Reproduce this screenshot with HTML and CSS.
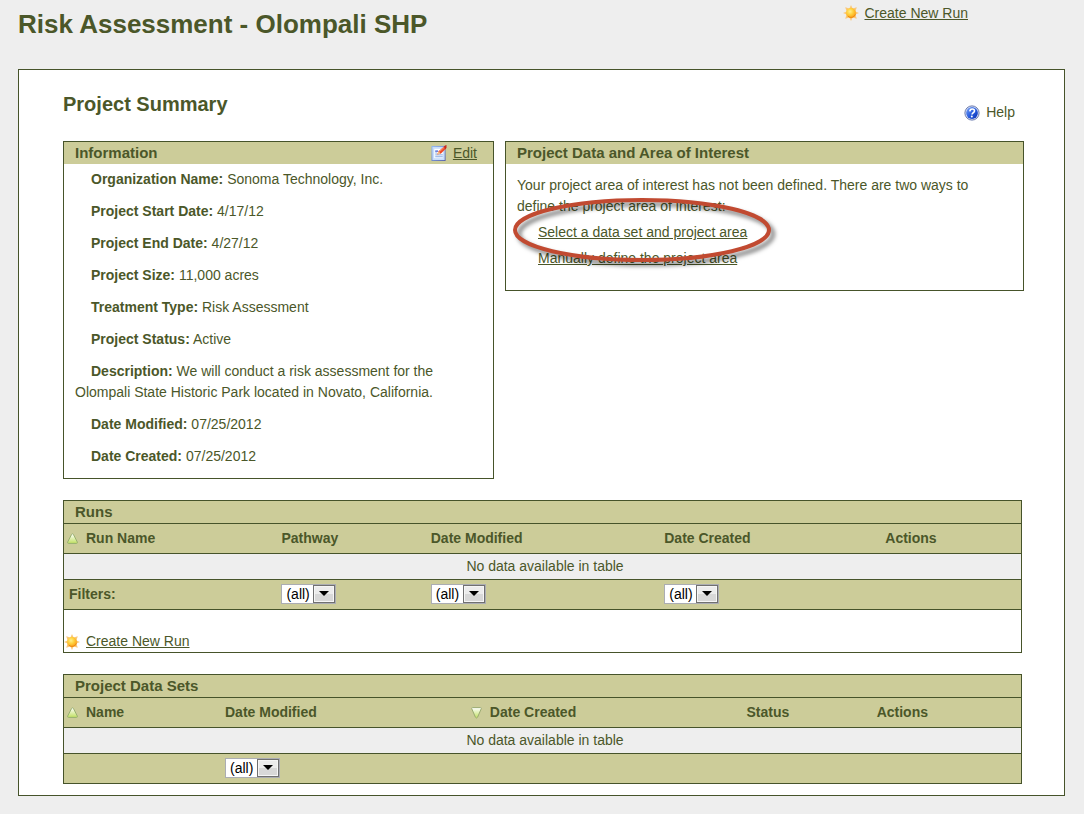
FILE: index.html
```html
<!DOCTYPE html>
<html lang="en">
<head>
<meta charset="utf-8">
<title>Risk Assessment - Olompali SHP</title>
<link rel="stylesheet" href="styles.css">
</head>
<body>
<svg class="defs" width="0" height="0" aria-hidden="true">
  <defs>
    <radialGradient id="sunFill" cx="40%" cy="35%" r="65%">
      <stop offset="0" stop-color="#fff08a"/><stop offset="0.5" stop-color="#ffcf3a"/><stop offset="1" stop-color="#f9a01c"/>
    </radialGradient>
    <linearGradient id="helpFill" x1="0" y1="0" x2="1" y2="1">
      <stop offset="0" stop-color="#7fa6f5"/><stop offset="0.5" stop-color="#2a5fe0"/><stop offset="1" stop-color="#0a2fb0"/>
    </linearGradient>
    <linearGradient id="pageFill" x1="0" y1="0" x2="1" y2="1">
      <stop offset="0" stop-color="#8fb8f2"/><stop offset="1" stop-color="#5560a8"/>
    </linearGradient>
    <linearGradient id="sortFill" x1="0" y1="0" x2="0" y2="1">
      <stop offset="0" stop-color="#ffffff"/><stop offset="1" stop-color="#c0e060"/>
    </linearGradient>
    <symbol id="sun" viewBox="0 0 16 16">
      <path d="M8 0 9.600 3.600 13.800 2.200 12.400 6.400 16 8 12.400 9.600 13.800 13.800 9.600 12.400 8 16 6.400 12.400 2.200 13.800 3.600 9.600 0 8 3.600 6.400 2.200 2.200 6.400 3.600Z" fill="#fac878"/>
      <circle cx="8" cy="8" r="4.900" fill="url(#sunFill)"/>
      <path d="M5 11.300a4.600 4.600 0 0 0 7.400-1.900" fill="none" stroke="#f08a10" stroke-width="1"/>
    </symbol>
    <symbol id="help" viewBox="0 0 16 16">
      <circle cx="8" cy="8" r="7.100" fill="#e4eafa" stroke="#6878ac" stroke-width="1"/>
      <circle cx="8" cy="8" r="5.900" fill="url(#helpFill)"/>
      <path d="M5.800 6.300C6 4.500 7 4 8.200 4c1.400 0 2.300.8 2.300 1.900 0 1.700-2.300 1.800-2.500 3.600" fill="none" stroke="#fff" stroke-width="1.600"/>
      <circle cx="7.800" cy="11.500" r="1" fill="#fff"/>
    </symbol>
    <symbol id="edit" viewBox="0 0 16 17">
      <rect x="0" y="1" width="15" height="16" fill="url(#pageFill)"/>
      <rect x="1" y="2" width="13" height="14" fill="#c8defa"/>
      <rect x="3" y="4" width="9" height="10" fill="#fff"/>
      <path d="M4 6.500h3M4 8.500h2M4 10.500h8M4 12.500h8" stroke="#7da3e0" stroke-width="1"/>
      <path d="M4 6.500h3" stroke="#3a4ed8" stroke-width="1"/>
      <path d="M6 10 7.600 6.600 13 1.800 15.400 4 9.800 9.200Z" fill="#ee4a28"/>
      <path d="M8.500 7 13.200 2.800" stroke="#ff9a78" stroke-width="1"/>
      <path d="M13 1.800 14.400.400 16 0V3l-1 1.400Z" fill="#c8281c"/>
      <path d="M6 10 7.600 6.600 9.800 9.200Z" fill="#f3c08a"/>
    </symbol>
    <symbol id="sortUp" viewBox="0 0 11 12">
      <path d="M4.600 1.400Q5.500.200 6.400 1.400L10.400 9.200Q10.500 10.400 9.500 10.400H1.500Q.500 10.400.600 9.200Z" fill="url(#sortFill)" stroke="#98b070" stroke-width="1"/>
    </symbol>
    <symbol id="sortDown" viewBox="0 0 11 12">
      <path d="M1.500.600H9.500Q10.500.600 10.300 1.600L6.600 10.200Q5.500 11.800 4.400 10.200L.700 1.600Q.500.600 1.500.600Z" fill="url(#sortFill)" stroke="#9aaa72" stroke-width="1"/>
    </symbol>
    <symbol id="drop" viewBox="0 0 22 18">
      <rect width="22" height="18" fill="#707070"/>
      <rect x="1" y="1" width="20" height="16" fill="#f6f6f6"/>
      <rect x="2" y="9" width="18" height="7" fill="#d8d8d8"/>
      <rect x="2" y="2" width="18" height="7" fill="#ececec"/>
      <path d="M6 6h10l-5 5Z" fill="#000"/>
    </symbol>
  </defs>
</svg>

<header class="page-header">
  <h1>Risk Assessment - Olompali SHP</h1>
  <a class="icon-link" href="#new-run"><svg class="icon" aria-hidden="true"><use href="#sun"/></svg><span>Create New Run</span></a>
</header>

<main class="card">
  <div class="card-header">
    <h2>Project Summary</h2>
    <a class="icon-link help" href="#help"><svg class="icon" aria-hidden="true"><use href="#help"/></svg><span>Help</span></a>
  </div>

  <div class="panels">
    <section class="box">
      <div class="bar">
        <h3>Information</h3>
        <a class="icon-link" href="#edit"><svg class="icon" aria-hidden="true"><use href="#edit"/></svg><span>Edit</span></a>
      </div>
      <div class="details">
        <p><b>Organization Name:</b> Sonoma Technology, Inc.</p>
        <p><b>Project Start Date:</b> 4/17/12</p>
        <p><b>Project End Date:</b> 4/27/12</p>
        <p><b>Project Size:</b> 11,000 acres</p>
        <p><b>Treatment Type:</b> Risk Assessment</p>
        <p><b>Project Status:</b> Active</p>
        <p><b>Description:</b> We will conduct a risk assessment for the Olompali State Historic Park located in Novato, California.</p>
        <p><b>Date Modified:</b> 07/25/2012</p>
        <p><b>Date Created:</b> 07/25/2012</p>
      </div>
    </section>

    <section class="box area">
      <div class="bar"><h3>Project Data and Area of Interest</h3></div>
      <div class="area-body">
        <p>Your project area of interest has not been defined. There are two ways to define the project area of interest:</p>
        <ul>
          <li><a href="#select">Select a data set and project area</a></li>
          <li><a href="#manual">Manually define the project area</a></li>
        </ul>
      </div>
      <svg class="callout" viewBox="0 0 270 76" aria-hidden="true">
        <ellipse cx="133" cy="35" rx="127" ry="30"/>
      </svg>
    </section>
  </div>

  <section class="box listing">
    <div class="bar"><h3>Runs</h3></div>
    <table class="runs">
      <colgroup><col class="run-name"><col class="run-path"><col class="run-modified"><col class="run-created"><col></colgroup>
      <thead>
        <tr>
          <th scope="col" class="sorted"><button type="button"><svg class="sort" aria-hidden="true"><use href="#sortUp"/></svg>Run Name</button></th>
          <th scope="col"><button type="button">Pathway</button></th>
          <th scope="col"><button type="button">Date Modified</button></th>
          <th scope="col"><button type="button">Date Created</button></th>
          <th scope="col">Actions</th>
        </tr>
      </thead>
      <tbody><tr><td colspan="5">No data available in table</td></tr></tbody>
      <tfoot>
        <tr>
          <th scope="row">Filters:</th>
          <td><span class="select"><select aria-label="Filter by pathway"><option>(all)</option></select><svg aria-hidden="true"><use href="#drop"/></svg></span></td>
          <td><span class="select"><select aria-label="Filter runs by date modified"><option>(all)</option></select><svg aria-hidden="true"><use href="#drop"/></svg></span></td>
          <td><span class="select"><select aria-label="Filter runs by date created"><option>(all)</option></select><svg aria-hidden="true"><use href="#drop"/></svg></span></td>
          <td></td>
        </tr>
      </tfoot>
    </table>
    <div class="listing-footer">
      <a class="icon-link" href="#new-run"><svg class="icon" aria-hidden="true"><use href="#sun"/></svg><span>Create New Run</span></a>
    </div>
  </section>

  <section class="box listing">
    <div class="bar"><h3>Project Data Sets</h3></div>
    <table class="sets">
      <colgroup><col class="set-name"><col class="set-modified"><col class="set-created"><col class="set-status"><col></colgroup>
      <thead>
        <tr>
          <th scope="col" class="sorted"><button type="button"><svg class="sort" aria-hidden="true"><use href="#sortUp"/></svg>Name</button></th>
          <th scope="col"><button type="button">Date Modified</button></th>
          <th scope="col" class="sorted"><button type="button"><svg class="sort" aria-hidden="true"><use href="#sortDown"/></svg>Date Created</button></th>
          <th scope="col">Status</th>
          <th scope="col">Actions</th>
        </tr>
      </thead>
      <tbody><tr><td colspan="5">No data available in table</td></tr></tbody>
      <tfoot>
        <tr>
          <td></td>
          <td><span class="select"><select aria-label="Filter data sets by date modified"><option>(all)</option></select><svg aria-hidden="true"><use href="#drop"/></svg></span></td>
          <td></td>
          <td></td>
          <td></td>
        </tr>
      </tfoot>
    </table>
  </section>
</main>
</body>
</html>
```

FILE: styles.css
```css
:root {
  --ink: #4b5729;
  --line: #46532a;
  --khaki: #cccc99;
  --grey: #eeeeee;
}

* { box-sizing: border-box; }

body {
  margin: 0;
  padding: 0 19px 18px 18px;
  background: var(--grey);
  color: var(--ink);
  font: 14px/21px "Liberation Sans", Arial, sans-serif;
}

h1, h2, h3, p, ul { margin: 0; padding: 0; }
ul { list-style: none; }
a { color: inherit; }
.defs { position: absolute; }

.page-header {
  display: flex;
  justify-content: space-between;
  align-items: flex-start;
  padding: 0 97px 21px 0;
}
.page-header h1 { font-size: 26px; line-height: 48px; }
.page-header .icon-link { line-height: 26px; }

.icon-link {
  display: inline-flex;
  align-items: center;
  gap: 6px;
  text-decoration: none;
}
.icon-link span { text-decoration: underline; }
.icon { width: 16px; height: 16px; }

.card {
  background: #fff;
  border: 1px solid var(--line);
  padding: 0 40px 11px 44px;
}
.card-header {
  display: flex;
  justify-content: space-between;
  align-items: flex-start;
  padding: 21px 9px 24px 0;
}
.card-header h2 { font-size: 20px; line-height: 26px; }
.help { padding-top: 11px; line-height: 21px; margin-bottom: -8px; }
.help span { text-decoration: none; }

.panels {
  display: grid;
  grid-template-columns: 431fr 519fr;
  align-items: start;
  gap: 11px;
}
.box { border: 1px solid var(--line); }
.bar {
  display: flex;
  justify-content: space-between;
  align-items: center;
  padding: 0 16px 0 11px;
  background: var(--khaki);
  line-height: 22px;
}
.bar h3 { font-size: 15px; }

.details { padding: 5px 11px 11px; }
.details p { padding-left: 0; text-indent: 16px; }
.details p + p { margin-top: 11px; }

.area { position: relative; }
.area-body { padding: 11px 32px 21px 11px; }
.area-body li { margin: 5px 0 0 21px; }
.callout {
  position: absolute;
  left: 3px;
  top: 53px;
  width: 270px;
  height: 76px;
  overflow: visible;
  pointer-events: none;
}
.callout ellipse {
  fill: none;
  stroke: #c14a31;
  stroke-width: 4;
  filter: drop-shadow(4px 4px 2px rgba(0, 0, 0, 0.5));
}

.listing { margin: 21px 2px 0 0; }
.listing .bar { border-bottom: 1px solid var(--line); }
.listing-footer {
  border-top: 1px solid var(--line);
  padding-top: 21px;
}
.listing-footer .icon-link { display: flex; }

table {
  width: 100%;
  table-layout: fixed;
  border-spacing: 0;
}
th, td { padding: 0 0 0 5px; text-align: left; }
thead th, tfoot th, tfoot td { height: 29px; background: var(--khaki); }
tbody td {
  height: 27px;
  background: var(--grey);
  border: solid var(--line);
  border-width: 1px 0;
  text-align: center;
}
.sorted { padding-left: 3px; }
th button {
  display: flex;
  align-items: center;
  gap: 8px;
  padding: 0;
  border: 0;
  background: none;
  color: inherit;
  font: inherit;
}
.sort { width: 11px; height: 12px; }

.run-name { width: 22.2%; }
.run-path { width: 15.6%; }
.run-modified { width: 24.4%; }
.run-created { width: 23.1%; }
.set-name { width: 16.3%; }
.set-modified { width: 25.9%; }
.set-created { width: 28.6%; }
.set-status { width: 13.6%; }

.select { display: flex; position: relative; width: 55px; margin-bottom: 1px; }
.select select {
  appearance: none;
  width: 100%;
  height: 20px;
  padding: 0 0 0 4px;
  border: 1px solid #abadb3;
  border-radius: 0;
  background: #fff;
  color: #000;
  font: inherit;
  line-height: 18px;
}
.select svg {
  position: absolute;
  top: 1px;
  right: 1px;
  width: 22px;
  height: 18px;
  pointer-events: none;
}
```
